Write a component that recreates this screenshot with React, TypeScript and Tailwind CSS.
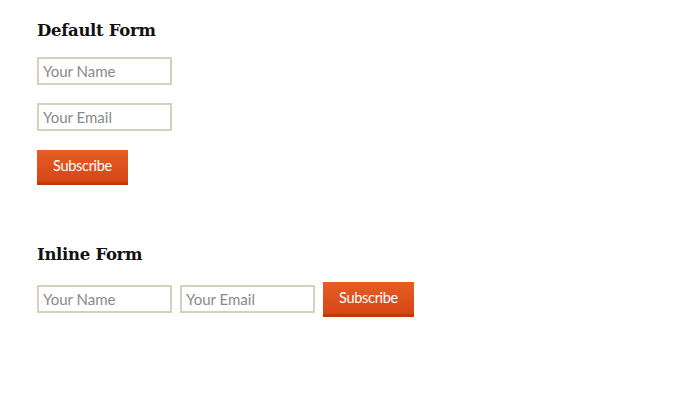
const inputCls =
  "h-[28px] w-[135px] border-2 border-[#d6d1b8] bg-white px-[4px] font-['Lato',sans-serif] text-[15px] text-[#555] placeholder:text-[#8a8a8a] outline-none";

const buttonCls =
  "flex items-center justify-center border-b-[3px] border-[#bf3b0c] bg-gradient-to-b from-[#e65d25] to-[#d64615] font-['Lato',sans-serif] text-[14.5px] tracking-[-0.3px] text-white";

const headingCls =
  "font-['DejaVu_Serif',serif] text-[16.5px] font-bold leading-[22px] tracking-[-0.3px] text-[#111]";

export default function App() {
  return (
    <main className="min-h-[400px] bg-white pl-[37px] pt-[20px]">
      <section>
        <h2 className={headingCls}>Default Form</h2>
        <div className="mt-[15px] flex flex-col gap-[18px]">
          <input className={inputCls} placeholder="Your Name" />
          <input className={inputCls} placeholder="Your Email" />
        </div>
        <button className={`${buttonCls} mt-[19px] h-[35px] w-[91px]`}>Subscribe</button>
      </section>

      <section className="mt-[59px]">
        <h2 className={headingCls}>Inline Form</h2>
        <div className="mt-[16px] flex items-start gap-[8px]">
          <input className={`${inputCls} mt-[3px]`} placeholder="Your Name" />
          <input className={`${inputCls} mt-[3px]`} placeholder="Your Email" />
          <button className={`${buttonCls} h-[35px] w-[91px]`}>Subscribe</button>
        </div>
      </section>
    </main>
  );
}
